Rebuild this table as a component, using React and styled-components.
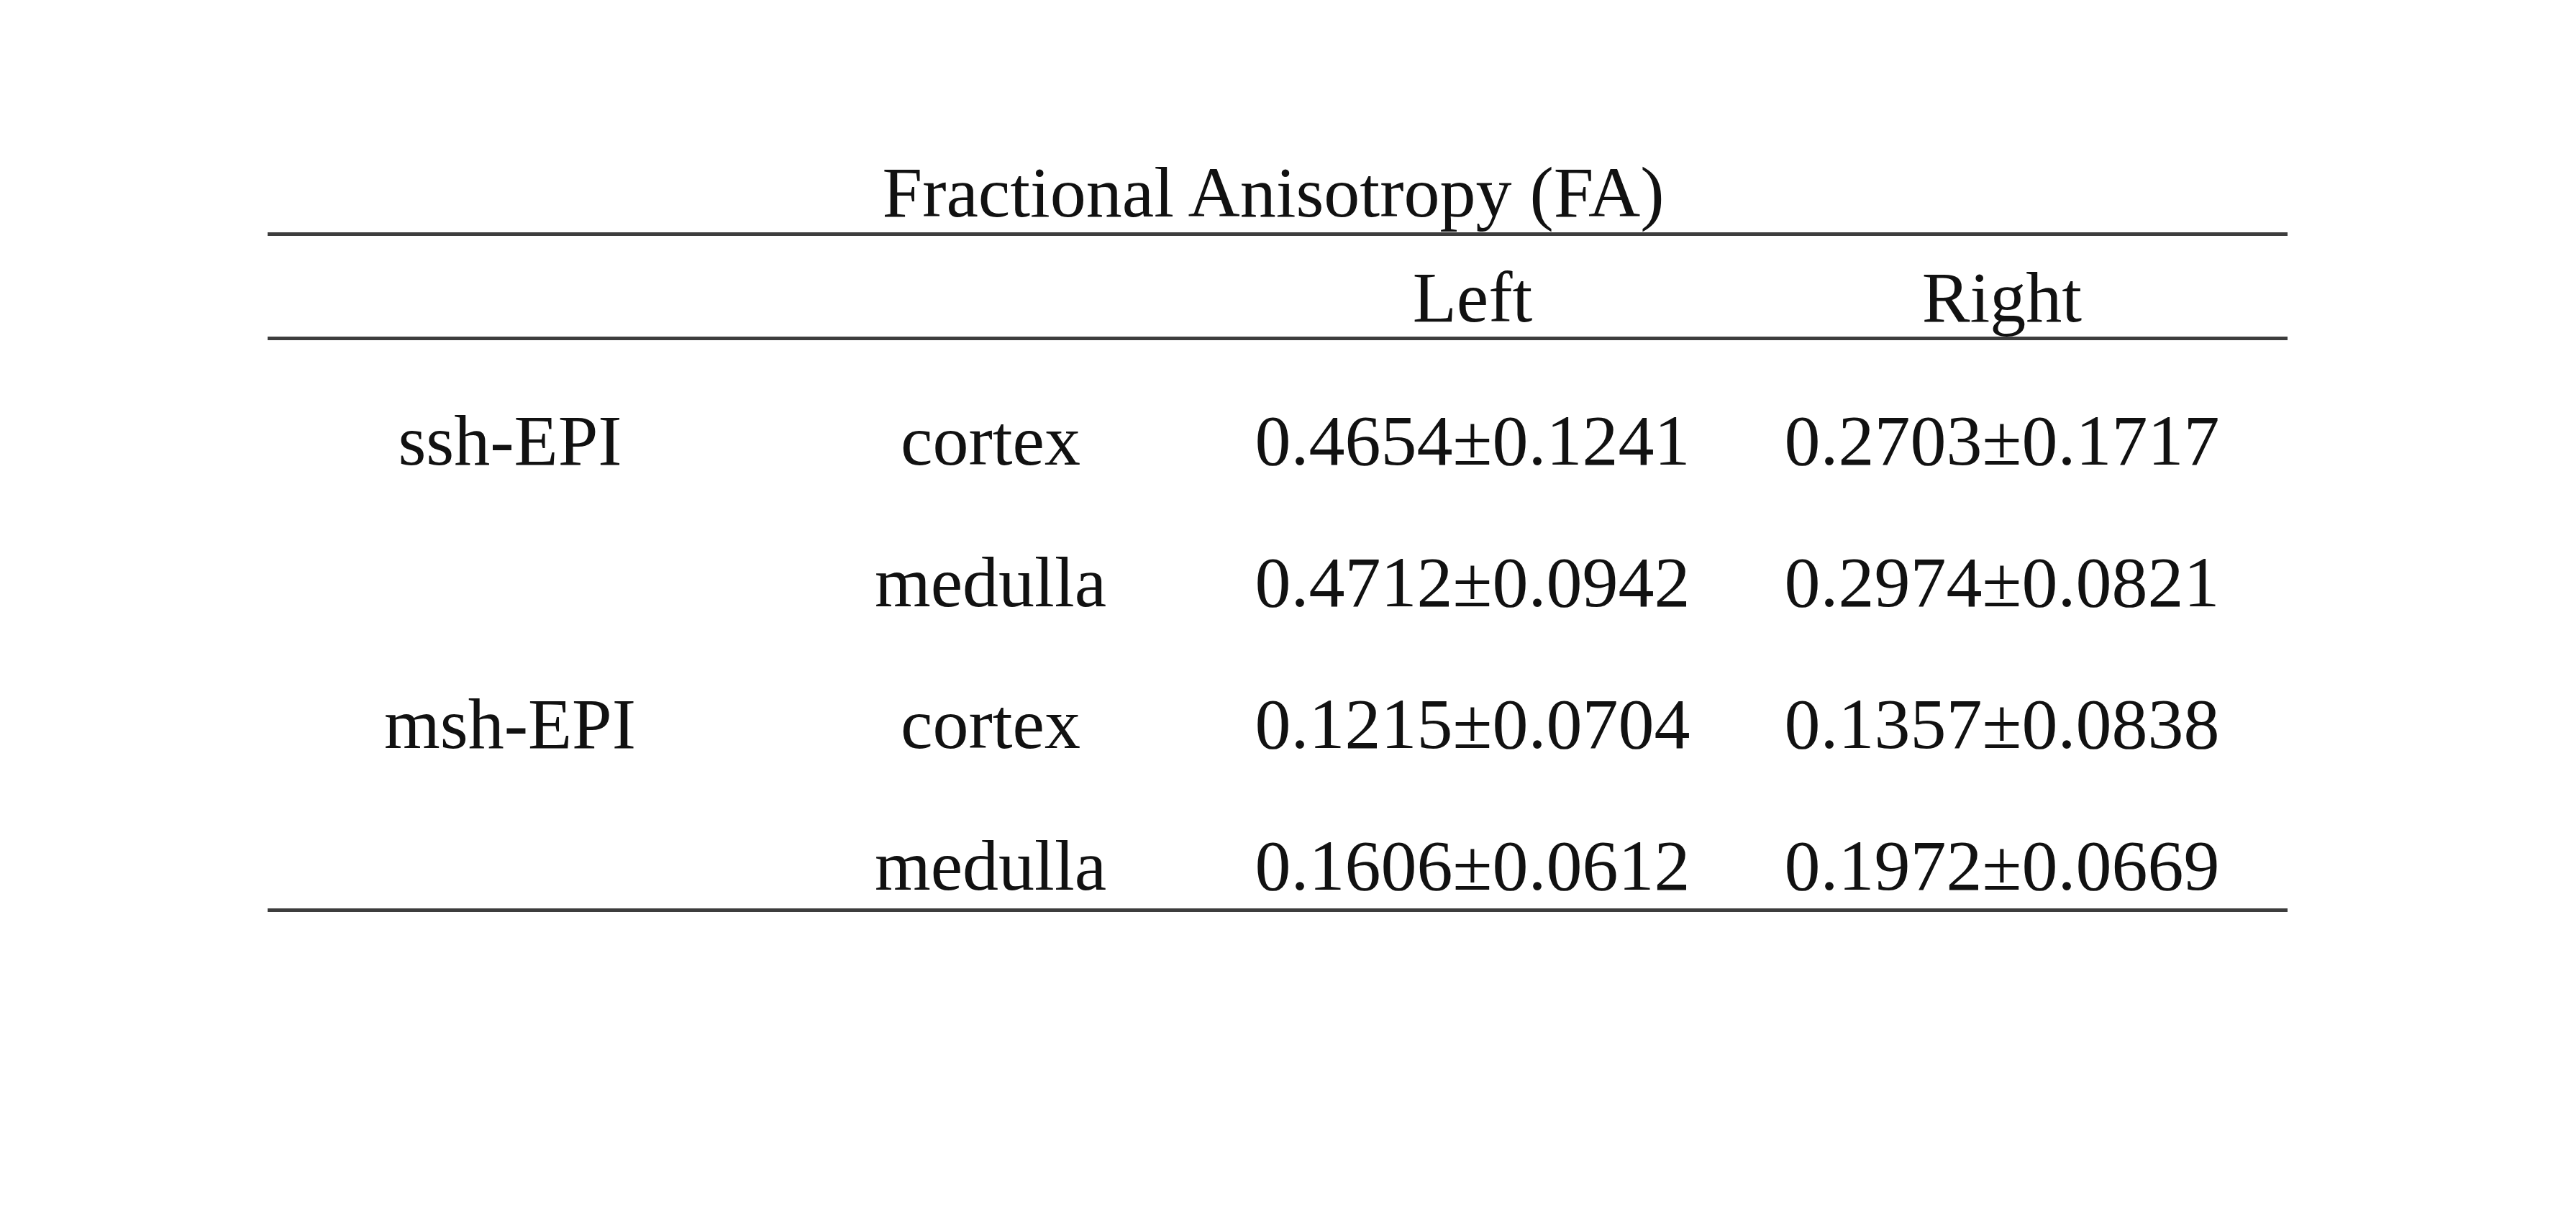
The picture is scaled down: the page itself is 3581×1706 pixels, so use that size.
import React from "react"
import styled, { createGlobalStyle } from "styled-components"

const GlobalStyle = createGlobalStyle`
  html, body {
    margin: 0;
    padding: 0;
    background: #ffffff;
  }
`

const Page = styled.div`
  width: 3581px;
  height: 1706px;
  box-sizing: border-box;
  padding: 218px 0 0 372px;
  background: #ffffff;
  font-family: "Liberation Serif", "Times New Roman", serif;
  font-size: 100px;
  color: #111;
`

const Table = styled.div`
  width: 2808px;
`

const Title = styled.div`
  line-height: 100px;
  text-align: center;
  padding: 0 12px 5px 0;
  border-bottom: 5px solid #3d3d3d;
`

const Grid = styled.div`
  display: grid;
  grid-template-columns: 674px 662px 678px 794px;
  line-height: 100px;
  text-align: center;
  white-space: nowrap;
`

const Head = styled(Grid)`
  padding: 36px 0 4px;
  border-bottom: 5px solid #3d3d3d;
`

const Body = styled(Grid)`
  row-gap: 97px;
  padding: 90px 0 9px;
  border-bottom: 5px solid #3d3d3d;
`

const Cell = styled.div``

const rows = [
  { method: "ssh-EPI", region: "cortex", left: "0.4654±0.1241", right: "0.2703±0.1717" },
  { method: "", region: "medulla", left: "0.4712±0.0942", right: "0.2974±0.0821" },
  { method: "msh-EPI", region: "cortex", left: "0.1215±0.0704", right: "0.1357±0.0838" },
  { method: "", region: "medulla", left: "0.1606±0.0612", right: "0.1972±0.0669" },
]

const App = () => {
  return (
    <Page>
      <GlobalStyle />
      <Table>
        <Title>Fractional Anisotropy (FA)</Title>
        <Head>
          <Cell />
          <Cell />
          <Cell>Left</Cell>
          <Cell>Right</Cell>
        </Head>
        <Body>
          {rows.map((r, i) => (
            <React.Fragment key={i}>
              <Cell>{r.method}</Cell>
              <Cell>{r.region}</Cell>
              <Cell>{r.left}</Cell>
              <Cell>{r.right}</Cell>
            </React.Fragment>
          ))}
        </Body>
      </Table>
    </Page>
  )
}

export default App
